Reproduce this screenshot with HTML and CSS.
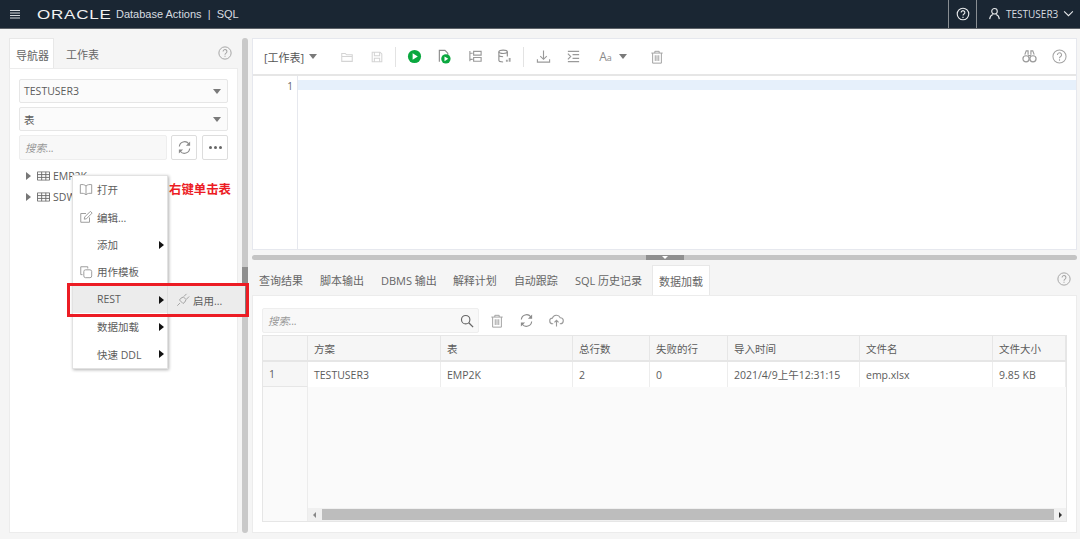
FILE: index.html
```html
<!DOCTYPE html>
<html lang="zh-CN">
<head>
    <meta charset="UTF-8">
    <title>Database Actions | SQL</title>
    <link rel="stylesheet" href="styles.css">
</head>
<body>
    <div class="header">
        <svg class="menu-icon" viewBox="0 0 12 10" width="12" height="10"><path d="M1 1.5h10M1 4h10M1 6.5h10M1 9h10" stroke="#d5d9dd" stroke-width="1.1"/></svg>
        <span class="logo">ORACLE</span>
        <span class="app-title">Database Actions &nbsp;|&nbsp; SQL</span>
        <div class="header-right">
            <div class="header-help">
                <svg viewBox="0 0 16 16" width="14" height="14"><circle cx="8" cy="8" r="6.6" fill="none" stroke="#e8eaec" stroke-width="1.3"/><path d="M5.9 6.3a2.1 2.1 0 1 1 3.2 1.8c-.8.5-1.1.9-1.1 1.7M8 11.2v1.3" fill="none" stroke="#e8eaec" stroke-width="1.3"/></svg>
            </div>
            <div class="header-user">
                <svg viewBox="0 0 14 14" width="13" height="13"><circle cx="7" cy="4.6" r="3" fill="none" stroke="#e8eaec" stroke-width="1.2"/><path d="M1.8 13c.3-3 2.2-4.6 3.4-5M12.2 13c-.3-3-2.2-4.6-3.4-5" fill="none" stroke="#e8eaec" stroke-width="1.2"/></svg>
                <span>TESTUSER3</span>
                <svg viewBox="0 0 12 8" width="11" height="7"><path d="M1 1.5l5 5 5-5" fill="none" stroke="#e8eaec" stroke-width="1.2"/></svg>
            </div>
        </div>
    </div>

    <div class="main">
        <!-- Navegador -->
        <div class="left-pane">
            <div class="tabs left-tabs">
                <div class="tab active">导航器</div>
                <div class="tab">工作表</div>
                <svg class="help-icon" viewBox="0 0 16 16" width="14" height="14"><use href="#i-help"/></svg>
            </div>
            <div class="nav-panel">
                <div class="select"><span>TESTUSER3</span><i class="caret"></i></div>
                <div class="select"><span>表</span><i class="caret"></i></div>
                <div class="search-row">
                    <div class="search-box">搜索...</div>
                    <div class="icon-button"><svg viewBox="0 0 16 16" width="15" height="15"><use href="#i-refresh"/></svg></div>
                    <div class="icon-button dots"><i></i><i></i><i></i></div>
                </div>
                <div class="tree">
                    <div class="tree-row"><i class="tree-arrow"></i><svg viewBox="0 0 14 10" width="13" height="10"><use href="#i-table"/></svg><span>EMP2K</span></div>
                    <div class="tree-row"><i class="tree-arrow"></i><svg viewBox="0 0 14 10" width="13" height="10"><use href="#i-table"/></svg><span>SDW</span></div>
                </div>
            </div>
        </div>

        <div class="v-split"><div class="v-thumb"></div></div>

        <div class="right-pane">
            <!-- Editor -->
            <div class="editor">
                <div class="toolbar">
                    <span class="sheet-name">[工作表]</span><i class="caret sheet-caret"></i>
                    <svg class="tb t-open" viewBox="0 0 16 16" width="14" height="14"><path d="M2 13V4h4l1.5 1.5H14V13zM2 7.5h12" fill="none" stroke="#d4d4d4" stroke-width="1.2"/></svg>
                    <svg class="tb t-save" viewBox="0 0 16 16" width="14" height="14"><path d="M2.5 2.5h9l2 2v9h-11zM5 2.5v4h6v-4M5 13.5V9.5h6v4" fill="none" stroke="#d4d4d4" stroke-width="1.2"/></svg>
                    <span class="tb-sep"></span>
                    <svg class="tb t-run" viewBox="0 0 16 16" width="15" height="15"><circle cx="8" cy="8" r="7" fill="#0aa83f"/><path d="M6 4.5l5.5 3.5L6 11.5z" fill="#fff"/></svg>
                    <svg class="tb t-script" viewBox="0 0 16 16" width="15" height="15"><path d="M2.5 13.5V1.5h6l3 3v3" fill="none" stroke="#8a8a8a" stroke-width="1.2"/><circle cx="9.5" cy="10.5" r="5" fill="#0aa83f"/><path d="M8 8l4 2.5L8 13z" fill="#fff"/></svg>
                    <svg class="tb t-plan" viewBox="0 0 16 16" width="15" height="15"><path d="M2 2v11M2 4.5h3M2 11h3M6 2.5h8v4H6zM6 9h8v4H6z" fill="none" stroke="#9a9a9a" stroke-width="1.2"/></svg>
                    <svg class="tb t-db" viewBox="0 0 16 16" width="15" height="15"><ellipse cx="6.5" cy="3" rx="4.5" ry="1.8" fill="none" stroke="#8f8f8f" stroke-width="1.2"/><path d="M2 3v9c0 1 2 1.8 4.5 1.8M11 3v5M2 6.5c0 1 2 1.8 4.5 1.8" fill="none" stroke="#8f8f8f" stroke-width="1.2"/><path d="M9.5 11.5h2v2h-2zM12.5 9.5h2v4h-2z" fill="#a5a5a5"/></svg>
                    <span class="tb-sep sep-two"></span>
                    <svg class="tb t-down" viewBox="0 0 16 16" width="15" height="15"><path d="M8 1.5v9M4.5 7.5L8 11l3.500-3.500M1.500 11v3h13v-3" fill="none" stroke="#9a9a9a" stroke-width="1.2"/></svg>
                    <svg class="tb t-indent" viewBox="0 0 16 16" width="15" height="15"><path d="M2 2.500h12M7 6h7M7 10h7M2 13.500h12M2 5l3 3-3 3" fill="none" stroke="#9a9a9a" stroke-width="1.2"/></svg>
                    <span class="font-size">A<small>a</small></span><i class="caret font-caret"></i>
                    <svg class="tb t-trash" viewBox="0 0 16 16" width="14" height="14"><use href="#i-trash"/></svg>
                    <span class="tb-spacer"></span>
                    <svg class="tb t-bino" viewBox="0 0 16 16" width="15" height="15"><path d="M3 6l1.500-4H6.500v4M13 6l-1.500-4H9.500v4M6.500 7h3" fill="none" stroke="#9a9a9a" stroke-width="1.2"/><circle cx="4.300" cy="10.500" r="3.300" fill="none" stroke="#9a9a9a" stroke-width="1.3"/><circle cx="11.700" cy="10.500" r="3.300" fill="none" stroke="#9a9a9a" stroke-width="1.3"/></svg>
                    <svg class="tb" viewBox="0 0 16 16" width="15" height="15"><use href="#i-help"/></svg>
                </div>
                <div class="code-area">
                    <div class="gutter">1</div>
                    <div class="code"><div class="active-line"></div></div>
                </div>
            </div>

            <div class="h-split"><div class="h-thumb"><i></i></div></div>

            <!-- Resultados -->
            <div class="tabs result-tabs">
                <div class="tab">查询结果</div>
                <div class="tab">脚本输出</div>
                <div class="tab">DBMS 输出</div>
                <div class="tab">解释计划</div>
                <div class="tab">自动跟踪</div>
                <div class="tab">SQL 历史记录</div>
                <div class="tab active">数据加载</div>
                <svg class="help-icon" viewBox="0 0 16 16" width="14" height="14"><use href="#i-help"/></svg>
            </div>
            <div class="result-panel">
                <div class="result-tools">
                    <div class="result-search">
                        <span>搜索...</span>
                        <svg viewBox="0 0 16 16" width="14" height="14"><circle cx="6.5" cy="6.5" r="4.8" fill="none" stroke="#666" stroke-width="1.3"/><path d="M10 10l5 5" stroke="#666" stroke-width="1.5"/></svg>
                    </div>
                    <svg viewBox="0 0 16 16" width="14" height="14"><use href="#i-trash"/></svg>
                    <svg viewBox="0 0 16 16" width="15" height="15"><use href="#i-refresh"/></svg>
                    <svg viewBox="0 0 16 16" width="15" height="15"><path d="M4.5 11.5H4a3 3 0 0 1-.4-6A4.500 4.500 0 0 1 12 5a3.200 3.200 0 0 1 0 6.500h-.5M8 14.500V8M5.800 10L8 7.800 10.200 10" fill="none" stroke="#9a9a9a" stroke-width="1.2"/></svg>
                </div>
                <div class="grid">
                    <div class="grid-head">
                        <div></div><div>方案</div><div>表</div><div>总行数</div><div>失败的行</div><div>导入时间</div><div>文件名</div><div>文件大小</div>
                    </div>
                    <div class="grid-row">
                        <div class="row-num">1</div><div>TESTUSER3</div><div>EMP2K</div><div>2</div><div>0</div><div>2021/4/9上午12:31:15</div><div>emp.xlsx</div><div>9.85 KB</div>
                    </div>
                    <div class="grid-fill">
                        <div class="fill-num"></div>
                        <div class="fill-body">
                            <div class="grid-empty"></div>
                            <div class="scrollbar"><i class="sb-left"></i><div class="sb-thumb"></div><i class="sb-right"></i></div>
                        </div>
                    </div>
                </div>
            </div>
        </div>
    </div>

    <!-- Menu contextual -->
    <div class="context-menu">
        <div class="menu-item"><svg viewBox="0 0 16 14" width="15" height="13"><path d="M8 3C6.500 1.500 4 1 1.500 1.500v10c2.500-.5 5 0 6.500 1.500 1.500-1.500 4-2 6.500-1.500v-10C12 1 9.500 1.500 8 3zM8 3v10" fill="none" stroke="#9a9a9a" stroke-width="1.1"/></svg><span>打开</span></div>
        <div class="menu-item"><svg viewBox="0 0 16 16" width="14" height="14"><path d="M12 8.500V14H2V4h6M6 10.500l.5-2.500 6.500-6.500 2 2L8.500 10z" fill="none" stroke="#9a9a9a" stroke-width="1.1"/></svg><span>编辑...</span></div>
        <div class="menu-item"><b></b><span>添加</span><i class="sub-arrow"></i></div>
        <div class="menu-item"><svg viewBox="0 0 16 16" width="14" height="14"><path d="M4 11H2V2h8v2" fill="none" stroke="#9a9a9a" stroke-width="1.1"/><rect x="5.5" y="5.5" width="9" height="9" rx="2" fill="none" stroke="#9a9a9a" stroke-width="1.1"/></svg><span>用作模板</span></div>
        <div class="menu-item selected"><b></b><span>REST</span><i class="sub-arrow"></i></div>
        <div class="menu-item"><b></b><span>数据加载</span><i class="sub-arrow"></i></div>
        <div class="menu-item"><b></b><span>快速 DDL</span><i class="sub-arrow"></i></div>
    </div>
    <div class="submenu">
        <svg viewBox="0 0 16 16" width="14" height="14"><path d="M1.5 14.5l3-3M4 8l4 4 2-1.5 1.5-3L8.5 4.5l-3 1.500zM9 4l3-3M12 7l3-3" fill="none" stroke="#a0a0a0" stroke-width="1.1"/></svg>
        <span>启用...</span>
    </div>
    <div class="red-box"></div>
    <div class="red-note">右键单击表</div>

    <svg class="defs" width="0" height="0">
        <symbol id="i-help" viewBox="0 0 16 16"><circle cx="8" cy="8" r="7" fill="none" stroke="#a3a3a3" stroke-width="1.1"/><path d="M5.8 6.3a2.2 2.2 0 1 1 3.4 1.8c-.8.5-1.2.9-1.2 1.8M8 11v1.4" fill="none" stroke="#a3a3a3" stroke-width="1.2"/></symbol>
        <symbol id="i-refresh" viewBox="0 0 16 16"><path d="M2.5 7A5.6 5.6 0 0 1 12.500 4l1 1M13.500 9a5.600 5.600 0 0 1-10 3l-1-1" fill="none" stroke="#8c8c8c" stroke-width="1.2"/><path d="M14 1.500V6H9.500zM2 14.500V10h4.500z" fill="#8c8c8c"/></symbol>
        <symbol id="i-trash" viewBox="0 0 16 16"><path d="M1.5 3.5h13M5.5 3.5V1.5h5v2M3 3.500V15h10V3.500M6 6v6.500M8 6v6.500M10 6v6.500" fill="none" stroke="#a0a0a0" stroke-width="1.1"/></symbol>
        <symbol id="i-table" viewBox="0 0 14 10"><path d="M.5.500h13v9H.5zM.5 3.500h13M.5 6.500h13M5 .5v9M9.500.5v9" fill="none" stroke="#6a6a6a" stroke-width="1"/></symbol>
    </svg>
</body>
</html>
```

FILE: styles.css
```css
/* Estilos generales */
* {
    box-sizing: border-box;
}

body {
    margin: 0;
    width: 1080px;
    height: 539px;
    overflow: hidden;
    display: flex;
    flex-direction: column;
    position: relative;
    background-color: #f5f5f5;
    color: #5c5c5c;
    font-family: "Open Sans", "Noto Sans CJK SC", sans-serif;
    font-size: 10.5px;
}

.defs {
    position: absolute;
}

/* Cabecera */
.header {
    height: 29px;
    flex-shrink: 0;
    display: flex;
    align-items: center;
    padding-left: 9px;
    background-color: #1a2633;
    border-bottom: 1px solid #5d6268;
    color: #d8dce0;
}

.logo {
    margin-left: 16px;
    width: 79px;
    font-family: "Liberation Sans", sans-serif;
    font-size: 13.5px;
    letter-spacing: 0.6px;
    color: #f2f2f2;
    transform: scaleX(1.26);
    transform-origin: left center;
}

.app-title {
    font-family: "Liberation Sans", sans-serif;
    font-size: 11px;
}

.header-right {
    margin-left: auto;
    display: flex;
    height: 100%;
    font-family: "Open Sans", sans-serif;
}

.header-help {
    width: 29px;
    display: flex;
    align-items: center;
    justify-content: center;
    border-left: 1px solid #888d92;
    border-right: 1px solid #888d92;
}

.header-user {
    width: 103px;
    display: flex;
    align-items: center;
    gap: 5px;
    padding-left: 11px;
    padding-bottom: 1px;
    font-size: 10px;
}

.main {
    flex: 1;
    display: flex;
    padding: 9px 3px 6px 9px;
    min-height: 0;
}

/* Panel izquierdo */
.left-pane {
    width: 229px;
    display: flex;
    flex-direction: column;
}

.tabs {
    display: flex;
    align-items: stretch;
    position: relative;
    flex-shrink: 0;
}

.tab {
    display: flex;
    align-items: center;
    white-space: nowrap;
    color: #666;
}

.tab.active {
    background-color: #fff;
    border: 1px solid #e8e8e8;
    border-bottom: none;
}

.left-tabs {
    height: 30px;
}

.left-tabs .tab {
    width: 45px;
    padding: 2px 0 0 6px;
    font-size: 11px;
}

.left-tabs .tab:nth-child(2) {
    padding-left: 12px;
    width: 60px;
}

.help-icon {
    position: absolute;
    right: 6px;
    top: 8px;
}

.nav-panel {
    flex: 1;
    padding: 10px 9px;
    background-color: #fff;
    border: 1px solid #ececec;
}

.select {
    height: 24px;
    margin-bottom: 4px;
    padding: 0 5px 0 4px;
    display: flex;
    align-items: center;
    justify-content: space-between;
    background-color: #fbfbfb;
    border: 1px solid #e6e6e6;
    border-radius: 2px;
}

.caret {
    width: 0;
    height: 0;
    border-left: 4px solid transparent;
    border-right: 4px solid transparent;
    border-top: 5px solid #7a7a7a;
}

.select .caret {
    margin-right: 1px;
}

.search-row {
    display: flex;
    gap: 4px;
}

.search-box {
    width: 148px;
    height: 25px;
    padding-left: 5px;
    display: flex;
    align-items: center;
    background-color: #f8f8f8;
    border: 1px solid #eee;
    border-radius: 2px;
    color: #999;
    font-style: italic;
}

.icon-button {
    width: 26px;
    height: 25px;
    display: flex;
    align-items: center;
    justify-content: center;
    background-color: #fff;
    border: 1px solid #ddd;
    border-radius: 2px;
}

.dots {
    margin-left: 1px;
    gap: 2px;
}

.dots i {
    width: 3px;
    height: 3px;
    border-radius: 50%;
    background-color: #666;
}

.tree {
    padding: 6px 0 0 7px;
}

.tree-row {
    height: 20.5px;
    display: flex;
    align-items: center;
    gap: 3px;
}

.tree-arrow {
    width: 0;
    height: 0;
    margin-right: 3px;
    border-top: 4px solid transparent;
    border-bottom: 4px solid transparent;
    border-left: 5px solid #777;
}

/* Separadores */
.v-split {
    width: 6px;
    margin: 0 4px;
    background-color: #c9c9c9;
    border-radius: 3px;
}

.v-thumb {
    height: 50px;
    margin-top: 229px;
    background-color: #8f8f8f;
}

.right-pane {
    flex: 1;
    min-width: 0;
    display: flex;
    flex-direction: column;
}

/* Editor */
.editor {
    height: 212px;
    flex-shrink: 0;
    display: flex;
    flex-direction: column;
    background-color: #fff;
    border: 1px solid #e6e8ee;
}

.toolbar {
    height: 37px;
    flex-shrink: 0;
    display: flex;
    align-items: center;
    padding-left: 11px;
    padding-right: 9px;
    border-bottom: 2px solid #e6e6e6;
}

.sheet-name {
    font-size: 11px;
    color: #555;
}

.sheet-caret {
    margin-left: 5px;
}

.tb {
    flex-shrink: 0;
}

.t-open {
    margin-left: 23px;
}

.t-save {
    margin-left: 16px;
}

.tb-sep {
    width: 1px;
    height: 20px;
    margin-left: 11px;
    background-color: #e3e3e3;
}

.t-run {
    margin-left: 11px;
}

.t-script {
    margin-left: 15px;
}

.t-plan {
    margin-left: 16px;
}

.t-db {
    margin-left: 14px;
}

.sep-two {
    margin-left: 11px;
}

.t-down {
    margin-left: 12px;
}

.t-indent {
    margin-left: 15px;
}

.font-size {
    margin-left: 18px;
    font-size: 12px;
    color: #8a8a8a;
}

.font-size small {
    font-size: 9px;
}

.font-caret {
    margin-left: 7px;
}

.t-trash {
    margin-left: 23px;
}

.tb-spacer {
    flex: 1;
}

.t-bino {
    margin-right: 15px;
}

.code-area {
    flex: 1;
    display: flex;
}

.gutter {
    width: 45px;
    padding: 3px 4px 0 0;
    text-align: right;
    border-right: 1px solid #e6e8ee;
    font-size: 10px;
    color: #666;
}

.code {
    flex: 1;
    padding-top: 4px;
}

.active-line {
    height: 10px;
    background-color: #e6f0fb;
}

.h-split {
    height: 5px;
    margin-top: 5px;
    flex-shrink: 0;
    display: flex;
    justify-content: center;
    background-color: #c4c4c4;
    border-radius: 3px;
}

.h-thumb {
    width: 38px;
    display: flex;
    justify-content: center;
    background-color: #8f8f8f;
}

.h-thumb i {
    width: 0;
    height: 0;
    margin-top: 1px;
    border-left: 3px solid transparent;
    border-right: 3px solid transparent;
    border-top: 3px solid #fff;
}

/* Resultados */
.result-tabs {
    height: 30px;
    margin-top: 5px;
    padding-left: 7px;
}

.result-tabs .tab {
    margin-right: 17px;
    font-size: 11px;
}

.result-tabs .tab:nth-child(3) {
    margin-right: 16px;
}

.result-tabs .tab:nth-child(6) {
    margin-right: 10px;
}

.result-tabs .tab.active {
    margin: 0;
    padding: 0 6px;
}

.result-tabs .help-icon {
    right: 6px;
    top: 7px;
}

.result-panel {
    flex: 1;
    min-height: 0;
    display: flex;
    flex-direction: column;
    padding: 12px 9px 10px;
    background-color: #fff;
    border: 1px solid #ececec;
}

.result-tools {
    height: 25px;
    flex-shrink: 0;
    margin-bottom: 2px;
    display: flex;
    align-items: center;
    gap: 15px;
}

.result-search {
    width: 217px;
    height: 25px;
    margin-right: -4px;
    padding: 0 4px 0 5px;
    display: flex;
    align-items: center;
    justify-content: space-between;
    background-color: #f8f8f8;
    border: 1px solid #eee;
    border-radius: 2px;
    color: #999;
    font-style: italic;
}

.grid {
    flex: 1;
    min-height: 0;
    display: flex;
    flex-direction: column;
    border: 1px solid #e6e6e6;
}

.grid-head,
.grid-row {
    display: grid;
    grid-template-columns: 45px 133px 132px 77px 78px 132px 133px 1fr;
    flex-shrink: 0;
}

.grid-head {
    height: 26px;
    background-color: #f6f6f6;
    border-bottom: 2px solid #e6e6e6;
}

.grid-head div {
    display: flex;
    align-items: center;
    padding-left: 6px;
    border-right: 1px solid #e6e6e6;
}

.grid-row {
    height: 25px;
    background-color: #fff;
}

.grid-row div {
    display: flex;
    align-items: center;
    padding-left: 6px;
    border-right: 1px solid #ededed;
}

.grid-row .row-num {
    background-color: #f6f6f6;
    border-bottom: 1px solid #e6e6e6;
}

.grid-fill {
    flex: 1;
    min-height: 0;
    display: flex;
}

.fill-num {
    width: 45px;
    background-color: #fafafa;
    border-right: 1px solid #ececec;
}

.fill-body {
    flex: 1;
    display: flex;
    flex-direction: column;
    background-color: #fafafa;
}

.grid-empty {
    flex: 1;
}

.scrollbar {
    height: 13px;
    display: flex;
    align-items: center;
    background-color: #f0f0f0;
}

.sb-left,
.sb-right {
    width: 0;
    height: 0;
    border-top: 3px solid transparent;
    border-bottom: 3px solid transparent;
}

.sb-left {
    margin: 0 6px 0 5px;
    border-right: 3px solid #888;
}

.sb-right {
    margin: 0 4px 0 5px;
    border-left: 3px solid #333;
}

.sb-thumb {
    flex: 1;
    height: 11px;
    background-color: #bdbdbd;
}

/* Menu contextual */
.context-menu {
    position: absolute;
    left: 72px;
    top: 175px;
    width: 96px;
    height: 194px;
    background-color: #fff;
    border: 1px solid #e2e2e2;
    box-shadow: 1px 1px 3px rgba(0, 0, 0, 0.3);
    z-index: 2;
}

.menu-item {
    height: 27.4px;
    display: flex;
    align-items: center;
    padding-left: 6px;
    position: relative;
}

.menu-item svg,
.menu-item b {
    width: 14px;
    margin-right: 4px;
    flex-shrink: 0;
}

.menu-item.selected {
    background-color: #ececec;
}

.sub-arrow {
    position: absolute;
    right: 3px;
    top: 10px;
    width: 0;
    height: 0;
    border-top: 4px solid transparent;
    border-bottom: 4px solid transparent;
    border-left: 5px solid #111;
}

.submenu {
    position: absolute;
    left: 168px;
    top: 286px;
    width: 77px;
    height: 28px;
    display: flex;
    align-items: center;
    gap: 3px;
    padding-left: 8px;
    background-color: #ececec;
    box-shadow: 1px 1px 2px rgba(0, 0, 0, 0.2);
    z-index: 2;
}

.red-box {
    position: absolute;
    left: 67px;
    top: 283px;
    width: 182px;
    height: 34px;
    border: 3px solid #ec1c24;
    z-index: 3;
}

.red-note {
    position: absolute;
    left: 169px;
    top: 180px;
    color: #ec1c24;
    font-size: 12.4px;
    font-weight: 700;
    z-index: 3;
}
```
